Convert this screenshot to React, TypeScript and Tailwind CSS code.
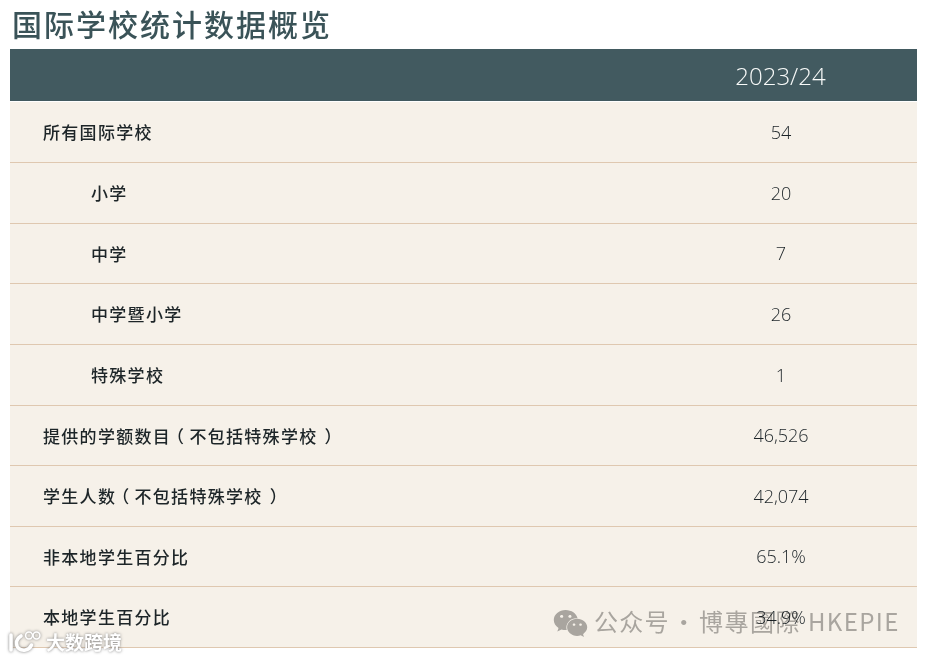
import { FaWeixin } from "react-icons/fa";

const rows = [
  { label: "所有国际学校", value: "54", h: "h-[61px]" },
  { label: "小学", value: "20", indent: true, h: "h-[61px]" },
  { label: "中学", value: "7", indent: true, h: "h-[60px]" },
  { label: "中学暨小学", value: "26", indent: true, h: "h-[61px]" },
  { label: "特殊学校", value: "1", indent: true, h: "h-[61px]" },
  { label: "提供的学额数目", note: "不包括特殊学校", value: "46,526", h: "h-[60px]" },
  { label: "学生人数", note: "不包括特殊学校", value: "42,074", h: "h-[61px]" },
  { label: "非本地学生百分比", value: "65.1%", h: "h-[60px]" },
  { label: "本地学生百分比", value: "34.9%", h: "h-[61px]" },
];

const sc = "font-['Noto_Sans_CJK_SC',sans-serif]";

export default function App() {
  return (
    <div className="relative h-[659px] w-[929px] overflow-hidden bg-white pl-[10px] pr-3 pt-[2px]">
      <h1 className={`${sc} h-[47px] pl-[2px] text-[30px] font-medium leading-[42px] tracking-[2px] text-[#3a5358]`}>
        国际学校统计数据概览
      </h1>

      <div className="flex h-[52px] items-center bg-[#425a60]">
        <div className="w-[634px]" />
        <div className="flex-1 pt-px text-center font-['Open_Sans',sans-serif] text-2xl font-light text-[#f8faf9]">
          2023/24
        </div>
      </div>

      <div className="mt-px">
        {rows.map((row) => (
          <div
            key={row.label}
            className={`flex items-center border-b border-[#dfc8b0] bg-[#f6f1e9] ${row.h}`}
          >
            <div
              className={`${sc} w-[635px] text-[17px] font-medium tracking-[1.3px] text-[#1d2528] ${
                row.indent ? "pl-[81px]" : "pl-[33px]"
              }`}
            >
              {row.label}
              {row.note ? (
                <>
                  <span className="-ml-1 mr-1">（</span>
                  {row.note}
                  <span className="ml-[7px]">）</span>
                </>
              ) : null}
            </div>
            <div className="-mt-px flex-1 text-center font-['Open_Sans',sans-serif] text-lg font-light text-[#1c2428]">
              {row.value}
            </div>
          </div>
        ))}
      </div>

      {/* wechat watermark */}
      <div className={`${sc} absolute left-[553px] top-[605px] flex items-center gap-[6px] text-[24px] leading-[32px] tracking-[1.3px] text-[#afafae] mix-blend-multiply`}>
        <FaWeixin className="h-[35px] w-[35px]" />
        <div className="flex pb-1">
          <span>公众号</span>
          <span className="w-[29px] text-center">·</span>
          <span className="mr-[7px] tracking-[1.5px]">博專國際</span>
          <span className="tracking-[1.4px]">HKEPIE</span>
        </div>
      </div>

      {/* bottom left logo watermark */}
      <div className="absolute left-[8px] top-[629px] flex items-center gap-[4px] text-white [text-shadow:0_0_3px_#777]">
        <svg width="34" height="25" viewBox="0 0 34 25" fill="none" stroke="#fff" strokeLinecap="round" className="drop-shadow-[0_0_1.5px_#777]">
          <path d="M3 6v15" strokeWidth="3.6" />
          <path d="M13 7c-3 2-4.5 4-4.5 7 0 5 4 8 9 7 3-.6 5-2.5 6-5" strokeWidth="3.6" />
          <circle cx="21" cy="6.5" r="3.4" strokeWidth="1.5" />
          <circle cx="28.5" cy="6.5" r="3.4" strokeWidth="1.5" />
        </svg>
        <span className={`${sc} text-[19px] font-bold leading-6`}>大数跨境</span>
      </div>
    </div>
  );
}
